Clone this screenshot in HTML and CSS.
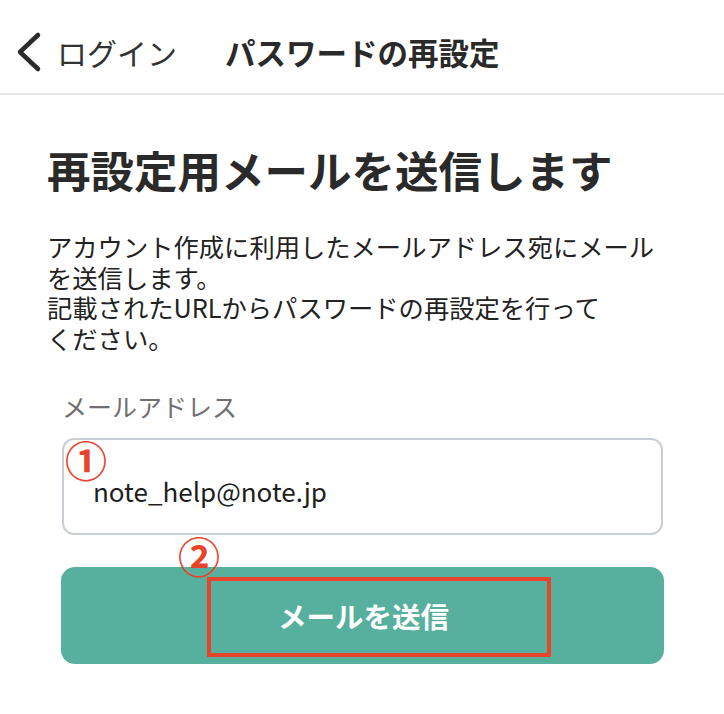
FILE: index.html
```html
<!DOCTYPE html>
<html lang="ja">
<head>
<meta charset="utf-8">
<link rel="stylesheet" href="styles.css">
</head>
<body>
<header class="topbar">
  <svg class="back-icon" width="28" height="42" viewBox="0 0 28 42"><polyline points="24,4 6,21 24,38" fill="none" stroke="#2b2b2b" stroke-width="4.5" stroke-linecap="round" stroke-linejoin="round"/></svg>
  <span class="back-label">ログイン</span>
  <span class="page-title">パスワードの再設定</span>
</header>
<main class="content">
  <h1 class="heading">再設定用メールを送信します</h1>
  <p class="desc">アカウント作成に利用したメールアドレス宛にメール<br>を送信します。<br>記載されたURLからパスワードの再設定を行って<br>ください。</p>
  <form class="form">
    <div class="label">メールアドレス</div>
    <div class="input">
      <span class="mark mark-1">①</span>
      <span class="input-text">note_help@note.jp</span>
    </div>
    <div class="button">
      <span class="mark mark-2">②</span>
      <span class="highlight"></span>
      <span class="button-text">メールを送信</span>
    </div>
  </form>
</main>
</body>
</html>
```
FILE: styles.css
```css
html, body {
  margin: 0;
  padding: 0;
  background: #ffffff;
}
body {
  font-family: "Noto Sans CJK JP", "Noto Sans", sans-serif;
  color: #222222;
}
.topbar {
  padding-top: 11px;
  box-sizing: border-box;
  height: 95px;
  border-bottom: 2px solid #e4e4e4;
  display: flex;
  align-items: center;
}
.back-icon {
  margin-left: 14px;
  flex: none;
}
.back-label {
  margin-left: 15px;
  font-size: 30px;
  color: #333333;
  font-weight: 400;
}
.page-title {
  margin-left: 48px;
  font-size: 30.5px;
  font-weight: 700;
  color: #2a2a2a;
}
.content {
  padding: 0 0 0 47px;
}
.heading {
  margin: 49px 0 0 0;
  font-size: 43.5px;
  line-height: 52px;
  font-weight: 700;
  color: #2a2a2a;
}
.desc {
  margin: 35px 0 0 0;
  font-size: 25.3px;
  line-height: 30.5px;
  color: #222222;
}
.form {
  margin: 38px 0 0 14px;
  width: 603px;
}
.label {
  padding-left: 1px;
  font-size: 25px;
  line-height: 30px;
  color: #707070;
}
.input {
  position: relative;
  margin-top: 17px;
  margin-left: 1px;
  width: 601px;
  height: 97px;
  box-sizing: border-box;
  border: 2px solid #c8ced4;
  border-radius: 12px;
  display: flex;
  align-items: center;
  padding: 7px 0 0 29px;
}
.input-text {
  font-size: 26px;
  color: #1e1e1e;
}
.button {
  position: relative;
  margin-top: 32px;
  height: 97px;
  border-radius: 14px;
  background: #56b09d;
  display: flex;
  align-items: center;
  justify-content: center;
}
.button-text {
  font-size: 28.5px;
  font-weight: 700;
  color: #ffffff;
  padding-left: 2px;
}
.mark {
  position: absolute;
  color: #e8432b;
  font-size: 42px;
  font-weight: 700;
  line-height: 1;
}
.mark-1 {
  left: 1px;
  top: -2px;
}
.mark-2 {
  left: 117px;
  top: -33px;
}
.highlight {
  position: absolute;
  left: 146px;
  top: 10px;
  width: 344px;
  height: 80px;
  box-sizing: border-box;
  border: 4px solid #e8432b;
}
```
